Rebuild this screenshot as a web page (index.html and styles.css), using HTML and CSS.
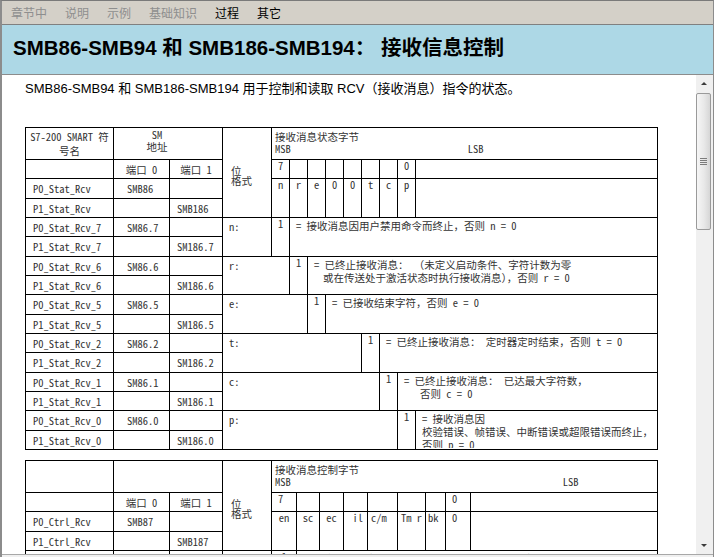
FILE: index.html
```html
<!DOCTYPE html>
<html lang="zh-CN">
<head>
<meta charset="utf-8">
<title>SMB86-SMB94 和 SMB186-SMB194</title>
<link rel="stylesheet" href="styles.css">
</head>
<body>
<div class="window">
  <nav class="menubar">
    <span class="mi off">章节中</span><span class="mi off">说明</span><span class="mi off">示例</span><span class="mi off">基础知识</span><span class="mi">过程</span><span class="mi">其它</span>
  </nav>
  <header class="titlebar"><h1>SMB86-SMB94 和 SMB186-SMB194： 接收信息控制</h1></header>
  <div class="main">
    <div class="content">
      <p class="intro">SMB86-SMB94 和 SMB186-SMB194 用于控制和读取 RCV（接收消息）指令的状态。</p>
      <table class="grid t1">
        <colgroup>
          <col class="w-sym"><col class="w-a0"><col class="w-a1"><col class="w-fmt">
          <col class="w-b"><col class="w-b"><col class="w-b"><col class="w-b"><col class="w-b"><col class="w-b"><col class="w-b"><col class="w-b">
          <col class="w-rest1">
        </colgroup>
        <tr class="hd">
          <td class="ctr head1">S7-200 SMART 符<br>号名</td>
          <td class="ctr head1 smaddr" colspan="2">SM<br>地址</td>
          <td class="fmt" rowspan="4">位<br>格式</td>
          <td class="cap" colspan="9">接收消息状态字节<br>MSB<span class="lsb1">LSB</span></td>
        </tr>
        <tr>
          <td></td><td class="ctr">端口 0</td><td class="ctr">端口 1</td>
          <td class="bit">7</td><td></td><td></td><td></td><td></td><td></td><td></td><td class="bit">0</td><td></td>
        </tr>
        <tr>
          <td class="sym">P0_Stat_Rcv</td><td class="a0">SMB86</td><td></td>
          <td class="bit" rowspan="2">n</td><td class="bit" rowspan="2">r</td><td class="bit" rowspan="2">e</td><td class="bit" rowspan="2">0</td><td class="bit" rowspan="2">0</td><td class="bit" rowspan="2">t</td><td class="bit" rowspan="2">c</td><td class="bit" rowspan="2">p</td><td rowspan="2"></td>
        </tr>
        <tr><td class="sym">P1_Stat_Rcv</td><td></td><td class="a1">SMB186</td></tr>

        <tr>
          <td class="sym">P0_Stat_Rcv_7</td><td class="a0">SM86.7</td><td></td>
          <td class="lbl" rowspan="2">n:</td><td class="bit" rowspan="2">1</td>
          <td class="desc" rowspan="2" colspan="8"><div class="dbox">= 接收消息因用户禁用命令而终止，否则 n = 0</div></td>
        </tr>
        <tr><td class="sym">P1_Stat_Rcv_7</td><td></td><td class="a1">SM186.7</td></tr>

        <tr>
          <td class="sym">P0_Stat_Rcv_6</td><td class="a0">SM86.6</td><td></td>
          <td class="lbl" rowspan="2" colspan="2">r:</td><td class="bit" rowspan="2">1</td>
          <td class="desc" rowspan="2" colspan="7"><div class="dbox">= 已终止接收消息： （未定义启动条件、字符计数为零<br><span class="ind1">或在传送处于激活状态时执行接收消息），否则 r = 0</span></div></td>
        </tr>
        <tr><td class="sym">P1_Stat_Rcv_6</td><td></td><td class="a1">SM186.6</td></tr>

        <tr>
          <td class="sym">P0_Stat_Rcv_5</td><td class="a0">SM86.5</td><td></td>
          <td class="lbl" rowspan="2" colspan="3">e:</td><td class="bit" rowspan="2">1</td>
          <td class="desc" rowspan="2" colspan="6"><div class="dbox">= 已接收结束字符，否则 e = 0</div></td>
        </tr>
        <tr><td class="sym">P1_Stat_Rcv_5</td><td></td><td class="a1">SM186.5</td></tr>

        <tr>
          <td class="sym">P0_Stat_Rcv_2</td><td class="a0">SM86.2</td><td></td>
          <td class="lbl" rowspan="2" colspan="6">t:</td><td class="bit" rowspan="2">1</td>
          <td class="desc" rowspan="2" colspan="3"><div class="dbox">= 已终止接收消息： 定时器定时结束，否则 t = 0</div></td>
        </tr>
        <tr><td class="sym">P1_Stat_Rcv_2</td><td></td><td class="a1">SM186.2</td></tr>

        <tr>
          <td class="sym">P0_Stat_Rcv_1</td><td class="a0">SM86.1</td><td></td>
          <td class="lbl" rowspan="2" colspan="7">c:</td><td class="bit" rowspan="2">1</td>
          <td class="desc" rowspan="2" colspan="2"><div class="dbox">= 已终止接收消息： 已达最大字符数，<br><span class="ind2">否则 c = 0</span></div></td>
        </tr>
        <tr><td class="sym">P1_Stat_Rcv_1</td><td></td><td class="a1">SM186.1</td></tr>

        <tr>
          <td class="sym">P0_Stat_Rcv_0</td><td class="a0">SM86.0</td><td></td>
          <td class="lbl" rowspan="2" colspan="8">p:</td><td class="bit" rowspan="2">1</td>
          <td class="desc" rowspan="2"><div class="dbox">= 接收消息因<br>校验错误、帧错误、中断错误或超限错误而终止，<br>否则 p = 0</div></td>
        </tr>
        <tr><td class="sym">P1_Stat_Rcv_0</td><td></td><td class="a1">SM186.0</td></tr>
      </table>

      <table class="grid t2">
        <colgroup>
          <col class="w-sym"><col class="w-a0"><col class="w-a1"><col class="w-fmt">
          <col class="w-c25"><col class="w-c23"><col class="w-c24"><col class="w-c24"><col class="w-c30"><col class="w-c28"><col class="w-c20"><col class="w-c25">
          <col class="w-rest2">
        </colgroup>
        <tr class="hd">
          <td></td>
          <td colspan="2"></td>
          <td class="fmt" rowspan="4">位<br>格式</td>
          <td class="cap" colspan="9">接收消息控制字节<br>MSB<span class="lsb2">LSB</span></td>
        </tr>
        <tr>
          <td></td><td class="ctr">端口 0</td><td class="ctr">端口 1</td>
          <td class="bitl">7</td><td></td><td></td><td></td><td></td><td></td><td></td><td class="bitl">0</td><td></td>
        </tr>
        <tr>
          <td class="sym">P0_Ctrl_Rcv</td><td class="a0">SMB87</td><td></td>
          <td class="bit" rowspan="2">en</td><td class="bit" rowspan="2">sc</td><td class="bit" rowspan="2">ec</td><td class="bitr" rowspan="2">il</td><td class="bitl2" rowspan="2">c/m</td><td class="bitl2" rowspan="2">Tm r</td><td class="bitl0" rowspan="2">bk</td><td class="bitl" rowspan="2">0</td><td rowspan="2"></td>
        </tr>
        <tr><td class="sym">P1_Ctrl_Rcv</td><td></td><td class="a1">SMB187</td></tr>
        <tr>
          <td class="sym">P0_Ctrl_Rcv_7</td><td class="a0">SM87.7</td><td></td>
          <td class="lbl" rowspan="2">en:</td><td class="bit" rowspan="2">1</td>
          <td class="desc" rowspan="2" colspan="8"><div class="dbox">= 允许接收消息功能，否则 en = 0 禁止接收消息功能</div></td>
        </tr>
        <tr><td class="sym">P1_Ctrl_Rcv_7</td><td></td><td class="a1">SM187.7</td></tr>
      </table>
    </div>
    <div class="scrollbar">
      <div class="sb-btn"><span class="tri-up"></span></div>
      <div class="thumb"><span class="grip"></span><span class="grip"></span><span class="grip"></span><span class="grip"></span></div>
      <div class="track"></div>
      <div class="sb-btn"><span class="tri-down"></span></div>
    </div>
  </div>
  <div class="footer"></div>
</div>
</body>
</html>
```

FILE: styles.css
```css
* { box-sizing: border-box; }
html, body { margin: 0; padding: 0; background: #fff; }
body { width: 714px; height: 557px; overflow: hidden; }

.window {
  width: 714px;
  height: 557px;
  border-top: 1px solid #7a7a7a;
  border-left: 2px solid #8c8c8c;
  border-right: 1px solid #8c8c8c;
  display: flex;
  flex-direction: column;
  font-family: "Liberation Sans", "Noto Sans CJK SC", sans-serif;
  overflow: hidden;
}

.menubar {
  flex: none;
  height: 24px;
  background: #d4d0c8;
  border-bottom: 1px solid #808080;
  display: flex;
  font-family: "Noto Sans CJK SC", sans-serif;
  font-size: 12px;
  line-height: 23px;
}
.mi { padding: 0 9px; color: #000; }
.mi.off { color: #8e8e8e; }

.titlebar {
  flex: none;
  height: 50px;
  background: #add8e6;
  border-bottom: 1px solid #8c8c8c;
  padding-left: 11px;
}
.titlebar h1 {
  margin: 0;
  font-size: 20.5px;
  font-weight: bold;
  line-height: 45px;
  color: #000;
  white-space: nowrap;
}

.main { flex: 1; display: flex; min-height: 0; }
.content { flex: 1; overflow: hidden; padding: 6px 0 0 23px; }
.intro { margin: 0 0 30px; font-size: 13px; line-height: 16px; color: #000; }

.footer {
  flex: none;
  height: 3px;
  border-top: 1px solid #a8a8a8;
  background: #f0f0f0;
}

.grid {
  border-collapse: collapse;
  table-layout: fixed;
  width: 632px;
  font-family: "Noto Sans Mono CJK SC", "Liberation Mono", "Noto Sans CJK SC", monospace;
  font-size: 10.5px;
  color: #333;
}
.t2 { margin-top: 10px; }
.grid tr { height: 19.33px; }
.grid tr.hd { height: 32px; }
.grid td {
  border: 1px solid #000;
  padding: 3px 0 0;
  line-height: 13px;
  vertical-align: top;
  white-space: nowrap;
  overflow: hidden;
}

.w-sym { width: 88px; }
.w-a0 { width: 56px; }
.w-a1 { width: 53px; }
.w-fmt { width: 49px; }
.w-b { width: 18px; }
.w-rest1 { width: 242px; }
.w-c25 { width: 25px; }
.w-c23 { width: 23px; }
.w-c24 { width: 24px; }
.w-c30 { width: 30px; }
.w-c28 { width: 28px; }
.w-c20 { width: 20px; }
.w-rest2 { width: 187px; }

.grid td.ctr { text-align: center; }
.grid td.head1 { padding-top: 2px; line-height: 14px; }
.grid td.smaddr { padding-right: 22px; line-height: 12px; padding-top: 1px; }
.grid td.sym { padding-left: 7px; }
.grid td.a0 { padding-left: 13px; }
.grid td.a1 { padding-left: 7px; }
.grid td.fmt { vertical-align: middle; padding: 7px 0 0 8px; line-height: 10px; }
.grid td.cap { padding: 3px 0 0 3px; line-height: 12px; }
.lsb1 { margin-left: 177px; }
.lsb2 { margin-left: 272px; }
.grid td.bit { text-align: center; padding-top: 0; line-height: 12px; }
.grid td.bitl { padding: 0 0 0 6px; line-height: 12px; }
.grid td.bitr { text-align: right; padding: 0 4px 0 0; line-height: 12px; }
.grid td.bitl2 { padding: 0 0 0 3px; line-height: 12px; }
.grid td.bitl0 { padding: 0 0 0 2px; line-height: 12px; }
.grid td.lbl { padding: 2px 0 0 6px; }
.grid td.desc { padding: 0; }
.dbox { height: 37px; overflow: hidden; padding: 1px 4px 0 6px; line-height: 13px; }
.ind1 { padding-left: 9px; }
.ind2 { padding-left: 16px; }

.scrollbar {
  flex: none;
  width: 17px;
  background: #f0f0f0;
  display: flex;
  flex-direction: column;
}
.sb-btn {
  flex: none;
  height: 17px;
  width: 15px;
  display: flex;
  align-items: center;
  justify-content: center;
}
.tri-up {
  width: 0; height: 0;
  border-left: 3px solid transparent;
  border-right: 3px solid transparent;
  border-bottom: 3px solid #3c3c3c;
}
.tri-down {
  width: 0; height: 0;
  border-left: 3px solid transparent;
  border-right: 3px solid transparent;
  border-top: 3px solid #3c3c3c;
}
.thumb {
  flex: none;
  width: 15px;
  height: 137px;
  margin-top: 1px;
  border: 1px solid #9a9a9a;
  border-radius: 2px;
  background: linear-gradient(to right, #f6f6f6, #e8e8e8 55%, #d6d6d6);
  display: flex;
  flex-direction: column;
  align-items: center;
  justify-content: center;
  gap: 1px;
}
.grip { display: block; width: 7px; height: 1px; background: #7c7c7c; }
.track { flex: 1; }
```
